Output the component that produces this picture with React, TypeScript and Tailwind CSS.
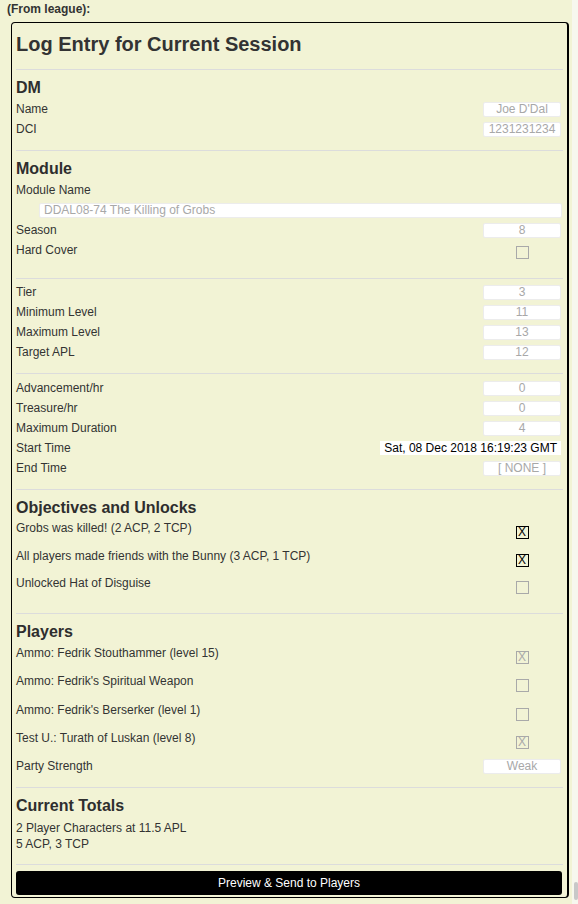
import React from "react";

function Hr({ cls }: { cls: string }) {
  return <div className={"h-px bg-[#dcdcdc] mr-[-1px] " + cls} />;
}

function Field({ value }: { value: string }) {
  return (
    <div className="w-[78px] h-[15px] mr-px bg-white border border-[#ececec] rounded-[2px] text-center text-[12px] leading-[13px] text-[#a8a8a8] overflow-hidden whitespace-nowrap">
      {value}
    </div>
  );
}

function Box({ state, cls = "" }: { state: "empty" | "black" | "gray"; cls?: string }) {
  const border =
    state === "black" ? "border-black text-black" : "border-[#a9a9a9] text-[#a9a9a9]";
  return (
    <div className={"w-[78px] mr-px flex justify-center " + cls}>
      <div
        className={
          "w-[13px] h-[13px] border box-border flex items-center justify-center text-[12px] leading-[11px] " +
          border
        }
      >
        {state === "empty" ? "" : "X"}
      </div>
    </div>
  );
}

function Row({ label, value }: { label: string; value: string }) {
  return (
    <div className="h-[20px] flex items-center justify-between">
      <span className="text-[12px] leading-[20px]">{label}</span>
      <Field value={value} />
    </div>
  );
}

function CheckRow({
  label,
  state,
  h,
}: {
  label: string;
  state: "empty" | "black" | "gray";
  h: string;
}) {
  return (
    <div className={"flex items-start justify-between " + h}>
      <span className="text-[12px] leading-[20px]">{label}</span>
      <Box state={state} cls="mt-[8px]" />
    </div>
  );
}

function Heading({ children, cls }: { children: React.ReactNode; cls: string }) {
  return (
    <div className={"text-[16px] leading-[20px] font-bold text-[#2e2e2e] " + cls}>{children}</div>
  );
}

export default function App() {
  return (
    <div className="h-[904px] overflow-hidden flex bg-[#f2f3d5] font-['Liberation_Sans',Arial,sans-serif] text-[#333]">
      <div className="flex-1">
        <div className="pt-[2px] pl-[7px] text-[12px] leading-[14px] font-bold text-[#333]">
          (From league):
        </div>
        <div className="mt-[6px] ml-[11px] w-[558px] border-t border-l border-b border-r-2 border-black rounded-[4px] pl-[4px] pr-[5px] pt-[9px] pb-[2px]">
          <div className="text-[20px] leading-[24px] font-bold text-[#333]">
            Log Entry for Current Session
          </div>
          <Hr cls="mt-[13px]" />

          <Heading cls="mt-[8px] mb-px">DM</Heading>
          <Row label="Name" value="Joe D'Dal" />
          <Row label="DCI" value="1231231234" />
          <Hr cls="mt-[11px]" />

          <Heading cls="mt-[8px] mb-px">Module</Heading>
          <div className="h-[20px] text-[12px] leading-[20px]">Module Name</div>
          <div className="h-[20px] flex items-center">
            <div className="ml-[23px] flex-1 h-[15px] bg-white border border-[#ececec] rounded-[2px] text-[12px] leading-[13px] text-[#a8a8a8] pl-[4px]">
              DDAL08-74 The Killing of Grobs
            </div>
          </div>
          <Row label="Season" value="8" />
          <div className="h-[20px] flex items-start justify-between">
            <span className="text-[12px] leading-[20px]">Hard Cover</span>
            <Box state="empty" cls="mt-[6px]" />
          </div>
          <Hr cls="mt-[18px]" />

          <div className="mt-[3px]">
            <Row label="Tier" value="3" />
            <Row label="Minimum Level" value="11" />
            <Row label="Maximum Level" value="13" />
            <Row label="Target APL" value="12" />
          </div>
          <Hr cls="mt-[11px]" />

          <div className="mt-[4px]">
            <Row label="Advancement/hr" value="0" />
            <Row label="Treasure/hr" value="0" />
            <Row label="Maximum Duration" value="4" />
            <div className="h-[20px] flex items-center justify-between">
              <span className="text-[12px] leading-[20px]">Start Time</span>
              <div className="h-[14px] mr-px bg-white px-[4px] text-[12px] leading-[14px] text-black whitespace-nowrap">
                Sat, 08 Dec 2018 16:19:23 GMT
              </div>
            </div>
            <Row label="End Time" value="[ NONE ]" />
          </div>
          <Hr cls="mt-[11px]" />

          <Heading cls="mt-[8px]">Objectives and Unlocks</Heading>
          <CheckRow label="Grobs was killed! (2 ACP, 2 TCP)" state="black" h="h-[28px]" />
          <CheckRow
            label="All players made friends with the Bunny (3 ACP, 1 TCP)"
            state="black"
            h="h-[27px]"
          />
          <CheckRow label="Unlocked Hat of Disguise" state="empty" h="h-[27px]" />
          <Hr cls="mt-[13px]" />

          <Heading cls="mt-[8px] mb-px">Players</Heading>
          <CheckRow label="Ammo: Fedrik Stouthammer (level 15)" state="gray" h="h-[28px]" />
          <CheckRow label="Ammo: Fedrik's Spiritual Weapon" state="empty" h="h-[29px]" />
          <CheckRow label="Ammo: Fedrik's Berserker (level 1)" state="empty" h="h-[28px]" />
          <CheckRow label="Test U.: Turath of Luskan (level 8)" state="gray" h="h-[28px]" />
          <Row label="Party Strength" value="Weak" />
          <Hr cls="mt-[11px]" />

          <Heading cls="mt-[8px]">Current Totals</Heading>
          <div className="pt-[4px] text-[12px] leading-[16px]">
            <div>2 Player Characters at 11.5 APL</div>
            <div>5 ACP, 3 TCP</div>
          </div>
          <Hr cls="mt-[12px]" />

          <button className="mt-[6px] w-full h-[24px] bg-black rounded-[3px] text-white text-[12px] leading-[24px] text-center">
            Preview &amp; Send to Players
          </button>
        </div>
      </div>
      <div className="w-[6px] bg-[#f7f7ee] flex flex-col justify-end pb-[4px]">
        <div className="h-[18px] w-[4px] ml-[2px] rounded-[2px] bg-[#c8c8c8]" />
      </div>
    </div>
  );
}
